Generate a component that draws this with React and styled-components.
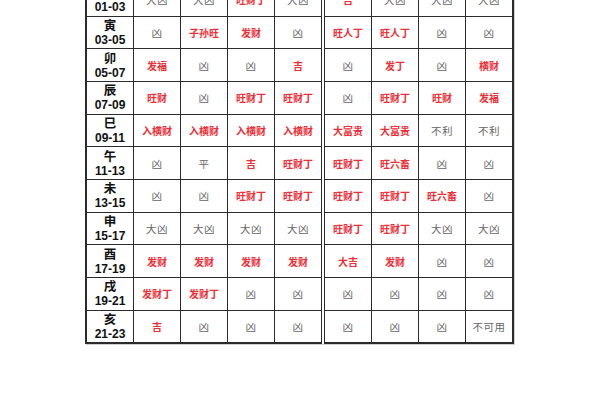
import React from "react";
import styled, { createGlobalStyle } from "styled-components";

const GlobalStyle = createGlobalStyle`
  html, body {
    margin: 0;
    padding: 0;
    background: #ffffff;
  }
  body {
    width: 600px;
    height: 400px;
    overflow: hidden;
    font-family: "Noto Sans CJK SC", "Liberation Sans", sans-serif;
  }
`;

const R = (t) => ({ t, good: true });
const B = (t) => ({ t, good: false });

const rows = [
  { zhi: "丑", time: "01-03", cells: [B("大凶"), B("大凶"), R("旺财丁"), B("大凶"), R("吉"), B("大凶"), B("大凶"), B("大凶")] },
  { zhi: "寅", time: "03-05", cells: [B("凶"), R("子孙旺"), R("发财"), B("凶"), R("旺人丁"), R("旺人丁"), B("凶"), B("凶")] },
  { zhi: "卯", time: "05-07", cells: [R("发福"), B("凶"), B("凶"), R("吉"), B("凶"), R("发丁"), B("凶"), R("横财")] },
  { zhi: "辰", time: "07-09", cells: [R("旺财"), B("凶"), R("旺财丁"), R("旺财丁"), B("凶"), R("旺财丁"), R("旺财"), R("发福")] },
  { zhi: "巳", time: "09-11", cells: [R("入横财"), R("入横财"), R("入横财"), R("入横财"), R("大富贵"), R("大富贵"), B("不利"), B("不利")] },
  { zhi: "午", time: "11-13", cells: [B("凶"), B("平"), R("吉"), R("旺财丁"), R("旺财丁"), R("旺六畜"), B("凶"), B("凶")] },
  { zhi: "未", time: "13-15", cells: [B("凶"), B("凶"), R("旺财丁"), R("旺财丁"), R("旺财丁"), R("旺财丁"), R("旺六畜"), B("凶")] },
  { zhi: "申", time: "15-17", cells: [B("大凶"), B("大凶"), B("大凶"), B("大凶"), R("旺财丁"), R("旺财丁"), B("大凶"), B("大凶")] },
  { zhi: "酉", time: "17-19", cells: [R("发财"), R("发财"), R("发财"), R("发财"), R("大吉"), R("发财"), B("凶"), B("凶")] },
  { zhi: "戌", time: "19-21", cells: [R("发财丁"), R("发财丁"), B("凶"), B("凶"), B("凶"), B("凶"), B("凶"), B("凶")] },
  { zhi: "亥", time: "21-23", cells: [R("吉"), B("凶"), B("凶"), B("凶"), B("凶"), B("凶"), B("凶"), B("不可用")] },
];

const Page = styled.div`
  padding-left: 85px;
`;

const Table = styled.table`
  border-collapse: collapse;
  table-layout: fixed;
  width: 424px;
  margin-top: -17.7px;
  border: 2px solid #2b2b2b;
  box-shadow: 1px 1px 0 #cfcfcf;
`;

const Row = styled.tr`
  height: 32.7px;
`;

const Label = styled.td`
  width: 46px;
  padding: 0;
  border: 1px solid #2b2b2b;
  text-align: center;
  vertical-align: middle;
  color: #111;
  font-weight: 700;
`;

const Zhi = styled.div`
  font-family: "Noto Sans CJK SC", sans-serif;
  font-size: 12.5px;
  line-height: 14px;
  margin-bottom: 1px;
`;

const Time = styled.div`
  font-family: "Liberation Sans", Arial, sans-serif;
  font-size: 12px;
  line-height: 14px;
`;

const Cell = styled.td`
  width: 46px;
  padding: 0;
  border: 1px solid #2b2b2b;
  border-left: ${(p) => (p.$split ? "4px double #2b2b2b" : "1px solid #2b2b2b")};
  text-align: center;
  vertical-align: middle;
  white-space: nowrap;
  font-family: "Noto Sans CJK SC", sans-serif;
  font-size: ${(p) => (p.$good ? "10px" : "10.5px")};
  font-weight: ${(p) => (p.$good ? 700 : 400)};
  color: ${(p) => (p.$good ? "#ee2e36" : "#666666")};
  letter-spacing: ${(p) => (p.$good ? "0" : "0.5px")};
`;

export default function App() {
  return (
    <Page>
      <GlobalStyle />
      <Table>
        <tbody>
          {rows.map((row) => (
            <Row key={row.zhi}>
              <Label>
                <Zhi>{row.zhi}</Zhi>
                <Time>{row.time}</Time>
              </Label>
              {row.cells.map((c, i) => (
                <Cell key={i} $good={c.good} $split={i === 4}>
                  {c.t}
                </Cell>
              ))}
            </Row>
          ))}
        </tbody>
      </Table>
    </Page>
  );
}
